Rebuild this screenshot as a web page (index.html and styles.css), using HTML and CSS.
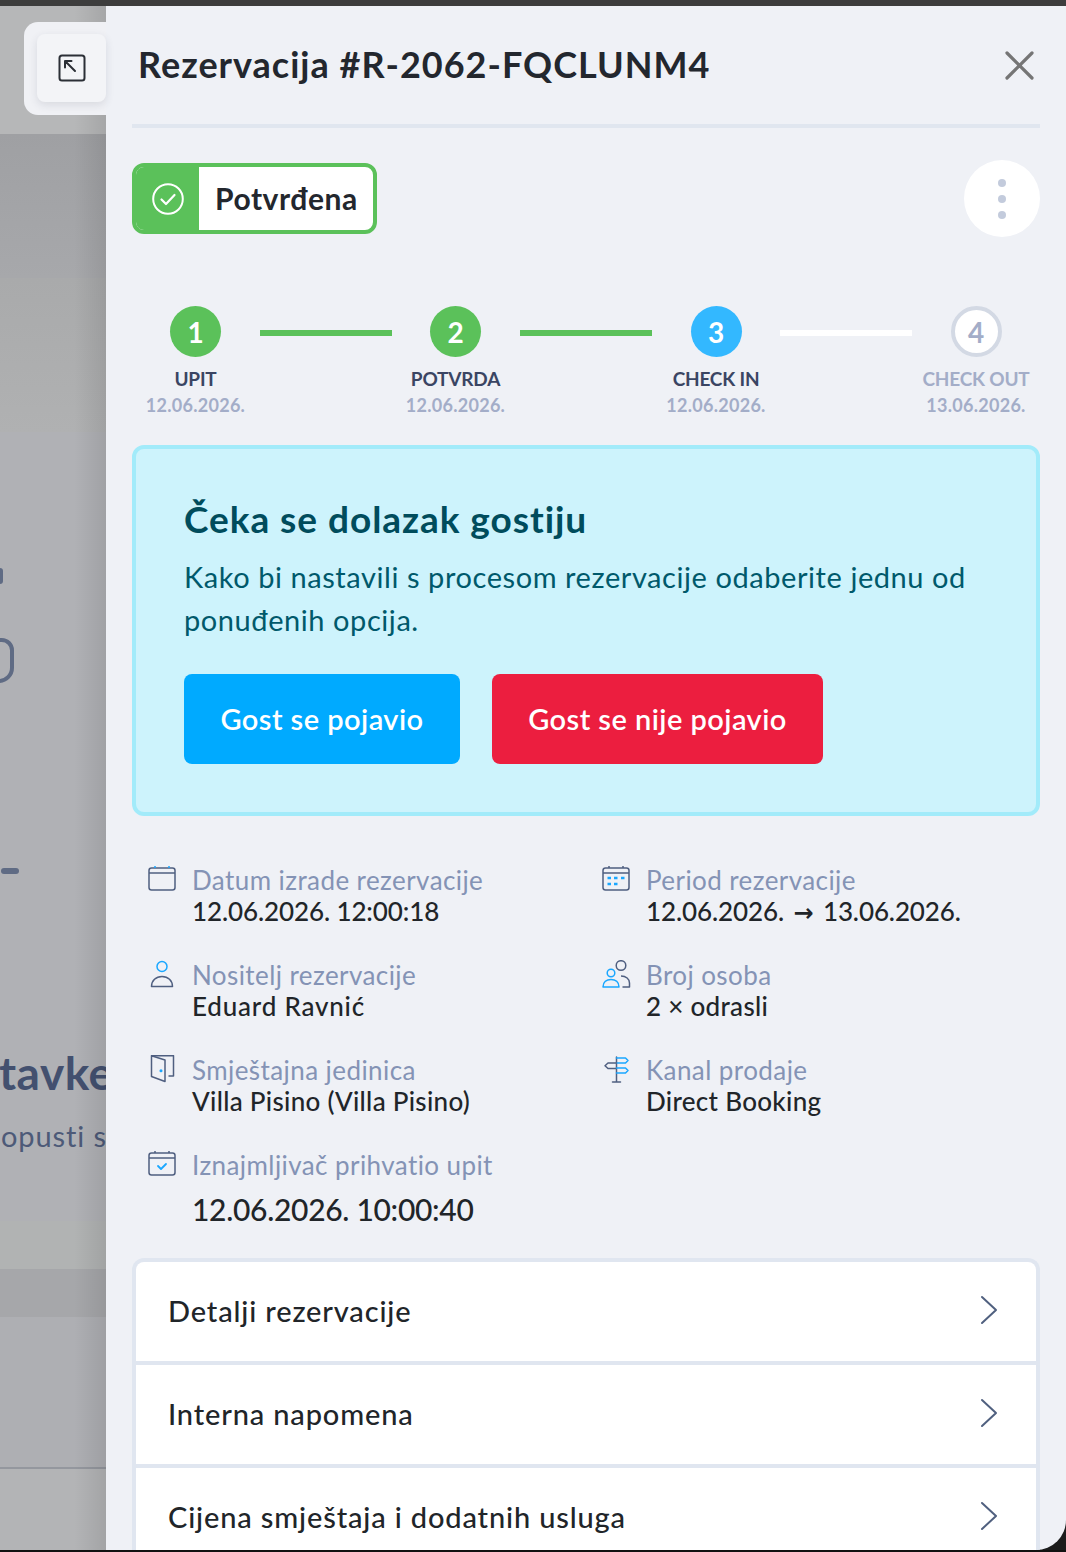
FILE: index.html
```html
<!DOCTYPE html>
<html lang="hr">
<head>
<meta charset="utf-8">
<title>Rezervacija</title>
<link rel="stylesheet" href="styles.css">
</head>
<body>
<div class="screen">
  <div class="topbar"></div>
  <div class="stage">
    <aside class="backdrop">
      <div class="band b1"></div>
      <div class="band b2"></div>
      <div class="band b3"></div>
      <div class="band b4">
        <div class="bg-glyph g1"></div>
        <div class="bg-glyph g2"></div>
        <div class="bg-glyph g3"></div>
        <div class="bg-title">tavke</div>
        <div class="bg-sub">opusti s</div>
      </div>
      <div class="band b5"></div>
      <div class="band b6"></div>
      <div class="band b7"></div>
      <div class="band b8"></div>
      <div class="tab">
        <button class="tab-btn" type="button">
          <svg width="28" height="28" viewBox="0 0 28 28" fill="none" stroke="#2b2f36" stroke-width="2" stroke-linecap="round" stroke-linejoin="round"><rect x="1.5" y="1.5" width="25" height="25" rx="2.5"/><path d="M7 7l10 10M7 7v6.5M7 7h6.5" stroke-width="2"/></svg>
        </button>
      </div>
    </aside>
    <main class="panel">
      <header class="head">
        <h1 class="title">Rezervacija #R-2062-FQCLUNM4</h1>
        <svg class="close" width="29" height="29" viewBox="0 0 29 29" fill="none" stroke="#757575" stroke-width="3.2" stroke-linecap="round"><path d="M2 2l25 25M27 2L2 27"/></svg>
      </header>
      <div class="status-row">
        <div class="badge">
          <span class="badge-icon">
            <svg width="32" height="32" viewBox="0 0 32 32" fill="none" stroke="#fff" stroke-linecap="round" stroke-linejoin="round"><circle cx="16" cy="16" r="14.8" stroke-width="2"/><path d="M9.5 16.5l4.500 4.500 8.500-9" stroke-width="2.200"/></svg>
          </span>
          <span class="badge-text">Potvrđena</span>
        </div>
        <button class="more" type="button"><i></i><i></i><i></i></button>
      </div>
      <ol class="steps">
        <li class="step early">
          <span class="dot done">1</span>
          <span class="s-name">UPIT</span>
          <span class="s-date">12.06.2026.</span>
        </li>
        <li class="line done"></li>
        <li class="step early">
          <span class="dot done">2</span>
          <span class="s-name">POTVRDA</span>
          <span class="s-date">12.06.2026.</span>
        </li>
        <li class="line done"></li>
        <li class="step">
          <span class="dot current">3</span>
          <span class="s-name">CHECK IN</span>
          <span class="s-date">12.06.2026.</span>
        </li>
        <li class="line"></li>
        <li class="step todo">
          <span class="dot">4</span>
          <span class="s-name">CHECK OUT</span>
          <span class="s-date">13.06.2026.</span>
        </li>
      </ol>
      <section class="callout">
        <h2 class="c-title">Čeka se dolazak gostiju</h2>
        <p class="c-text">Kako bi nastavili s procesom rezervacije odaberite jednu od ponuđenih opcija.</p>
        <div class="c-actions">
          <button class="btn blue" type="button">Gost se pojavio</button>
          <button class="btn red" type="button">Gost se nije pojavio</button>
        </div>
      </section>
      <section class="info">
        <div class="item">
          <svg class="ico" width="30" height="28" viewBox="0 0 30 28" fill="none" stroke="#4f5f80" stroke-width="1.5" stroke-linejoin="round"><rect x="2" y="3" width="26" height="22" rx="2.5"/><path d="M2 8h26"/><path d="M8 1v2M22 1v2" stroke="#1aa7ff"/></svg>
          <div><div class="lab">Datum izrade rezervacije</div><div class="val num">12.06.2026. 12:00:18</div></div>
        </div>
        <div class="item">
          <svg class="ico" width="30" height="28" viewBox="0 0 30 28" fill="none" stroke="#4f5f80" stroke-width="1.5" stroke-linejoin="round"><rect x="2" y="3" width="26" height="22" rx="2.5"/><path d="M2 8h26M8 1v2M22 1v2"/><path d="M6.500 13h3.500M13 13h3.500M20 13h3.500M6.500 19h3.500M13 19h3.500" stroke="#1aa7ff" stroke-width="2.500"/></svg>
          <div><div class="lab">Period rezervacije</div><div class="val num">12.06.2026. <span class="arrow">→</span> 13.06.2026.</div></div>
        </div>
        <div class="item">
          <svg class="ico" width="30" height="28" viewBox="0 0 30 28" fill="none" stroke-width="1.500"><circle cx="15" cy="6.500" r="5" stroke="#1aa7ff"/><path d="M4.500 26.500c0-6 4.500-10 10.500-10s10.500 4 10.500 10z" stroke="#4f5f80" stroke-linejoin="round"/></svg>
          <div><div class="lab">Nositelj rezervacije</div><div class="val name">Eduard Ravnić</div></div>
        </div>
        <div class="item">
          <svg class="ico" width="30" height="28" viewBox="0 0 30 28" fill="none" stroke-width="1.500" stroke-linejoin="round"><circle cx="20" cy="5.500" r="4.800" stroke="#4f5f80"/><circle cx="10" cy="13" r="3.800" stroke="#1aa7ff"/><path d="M2 27c0-5 3.500-7.500 8-7.500s8 2.500 8 7.500z" stroke="#1aa7ff"/><path d="M20 16c5 0 8.500 3 8.500 7v4h-7" stroke="#4f5f80"/></svg>
          <div><div class="lab">Broj osoba</div><div class="val">2 × odrasli</div></div>
        </div>
        <div class="item">
          <svg class="ico" width="30" height="28" viewBox="0 0 30 28" fill="none" stroke="#4f5f80" stroke-width="1.500" stroke-linejoin="round"><path d="M4.500 .7H26.500V21H21.500"/><path d="M4.500 .7L18 5V26.500L4.500 21.500z"/><circle cx="14" cy="15.700" r=".8" fill="#1aa7ff" stroke="#1aa7ff"/></svg>
          <div><div class="lab">Smještajna jedinica</div><div class="val">Villa Pisino (Villa Pisino)</div></div>
        </div>
        <div class="item">
          <svg class="ico" width="30" height="28" viewBox="0 0 30 28" fill="none" stroke-width="1.500" stroke-linejoin="round" stroke-linecap="round"><path d="M15.500 2v25M11.500 27h8" stroke="#4f5f80"/><path d="M15.500 3h9l2.500 2.500-2.500 2.500h-9" stroke="#1aa7ff"/><path d="M15.500 8H7l-3 2.750 3 2.750h8.500" stroke="#4f5f80"/><path d="M15.500 13h9l2.500 2.500-2.500 2.500h-9" stroke="#1aa7ff"/></svg>
          <div><div class="lab">Kanal prodaje</div><div class="val">Direct Booking</div></div>
        </div>
        <div class="item wide">
          <svg class="ico" width="30" height="28" viewBox="0 0 30 28" fill="none" stroke="#4f5f80" stroke-width="1.500" stroke-linejoin="round"><rect x="2" y="3" width="26" height="22" rx="2.500"/><path d="M2 8h26M8 1v2M22 1v2"/><path d="M11 16l3 3 5-5" stroke="#1aa7ff" stroke-width="1.800" stroke-linecap="round"/></svg>
          <div><div class="lab">Iznajmljivač prihvatio upit</div><div class="val big">12.06.2026. 10:00:40</div></div>
        </div>
      </section>
      <section class="accordion">
        <div class="row"><span>Detalji rezervacije</span><svg width="18" height="30" viewBox="0 0 18 30" fill="none" stroke="#50607f" stroke-width="2" stroke-linecap="round" stroke-linejoin="round"><path d="M2 2l14 13L2 28"/></svg></div>
        <div class="row"><span>Interna napomena</span><svg width="18" height="30" viewBox="0 0 18 30" fill="none" stroke="#50607f" stroke-width="2" stroke-linecap="round" stroke-linejoin="round"><path d="M2 2l14 13L2 28"/></svg></div>
        <div class="row"><span>Cijena smještaja i dodatnih usluga</span><svg width="18" height="30" viewBox="0 0 18 30" fill="none" stroke="#50607f" stroke-width="2" stroke-linecap="round" stroke-linejoin="round"><path d="M2 2l14 13L2 28"/></svg></div>
      </section>
    </main>
  </div>
  <div class="bottombar"></div>
</div>
</body>
</html>
```
FILE: styles.css
```css
* { box-sizing: border-box; }
html, body { margin: 0; padding: 0; height: 100%; overflow: hidden; }
body { background: #222; font-family: "Lato", "Noto Sans", sans-serif; color: #212529; }
.screen { width: 1066px; height: 1552px; display: flex; flex-direction: column; background: #1c1c1c; }
.topbar { height: 6px; background: #3d3d3d; flex: none; }
.bottombar { height: 2px; background: #111; flex: none; }
.stage { flex: 1; display: flex; min-height: 0; }

.backdrop { position: relative; width: 106px; flex: none; display: flex; flex-direction: column; overflow: visible; background: #aeafb2; }
.backdrop::after { content: ""; position: absolute; inset: 0; background: linear-gradient(90deg, rgba(0,0,0,0) 70%, rgba(0,0,0,.09) 100%); pointer-events: none; }
.band { flex: none; position: relative; overflow: hidden; }
.b1 { height: 128px; background: #b6b7b8; }
.b2 { height: 144px; background: linear-gradient(#9fa0a3, #a7a8ab); }
.b3 { height: 154px; background: linear-gradient(#a9aaab, #b0b1b2); }
.b4 { height: 789px; background: #b0b1b5; }
.b5 { height: 48px; background: #b1b3b3; }
.b6 { height: 48px; background: #a6a7aa; }
.b7 { height: 152px; background: #aeafb3; border-bottom: 2px solid #94979e; }
.b8 { flex: 1; background: #b3b4b6; }
.bg-glyph { position: absolute; background: #5f6b84; }
.g1 { left: -3px; top: 136px; width: 6px; height: 16px; border-radius: 3px; }
.g2 { left: -12px; top: 206px; width: 26px; height: 45px; background: transparent; border: 4px solid #5f6b84; border-radius: 14px 16px 20px 14px; }
.g3 { left: 1px; top: 436px; width: 18px; height: 6px; border-radius: 3px; }
.bg-title { position: absolute; left: -1px; top: 616px; font-size: 46px; font-weight: 700; letter-spacing: .5px; color: #43506f; line-height: 50px; white-space: nowrap; }
.bg-sub { position: absolute; left: 1px; top: 687px; font-size: 29px; letter-spacing: .9px; color: #4d5a78; line-height: 34px; white-space: nowrap; }

.tab { position: absolute; z-index: 2; left: 24px; top: 16px; width: 82px; height: 93px; background: #f0f1f5; border-radius: 14px 0 0 14px; padding: 12px 0 0 13px; }
.tab-btn { width: 69px; height: 68px; padding: 0; border: 0; background: #f3f4f7; border-radius: 8px; box-shadow: 0 3px 8px rgba(40,50,70,.12); display: flex; align-items: center; justify-content: center; }

.panel { flex: 1; min-width: 0; background: #eff1f6; padding: 0 26px 0 26px; overflow: hidden; border-bottom-right-radius: 30px; }
.head { height: 122px; border-bottom: 4px solid #e0e6ef; display: flex; align-items: flex-start; justify-content: space-between; padding: 34px 6px 0 6px; }
.title { margin: 0; font-size: 36px; line-height: 48px; font-weight: 700; letter-spacing: 1px; color: #23272e; }
.close { margin-top: 11px; }
.status-row { display: flex; justify-content: space-between; align-items: flex-start; margin-top: 32px; }
.badge { margin-top: 3px; height: 71px; width: 245px; display: flex; border: 4px solid #5bc15a; border-radius: 12px; overflow: hidden; background: #fff; }
.badge-icon { width: 63px; background: #5bc15a; display: flex; align-items: center; justify-content: center; }
.badge-text { padding-left: 16px; font-size: 30px; font-weight: 700; letter-spacing: .55px; line-height: 63px; color: #23272e; }
.more { width: 76px; height: 77px; border-radius: 50%; background: #fff; border: 0; padding: 0; display: flex; flex-direction: column; align-items: center; justify-content: center; gap: 8px; }
.more i { width: 8px; height: 8px; border-radius: 50%; background: #c3cbdc; }

.steps { list-style: none; margin: 69px 0 0; padding: 0; display: flex; align-items: flex-start; }
.step { width: 128px; display: flex; flex-direction: column; align-items: center; }
.step.early { padding-right: 1px; }
.line { width: 132px; height: 6px; margin-top: 24px; background: #fff; }
.line.done { background: #5bc15a; }
.dot { width: 51px; height: 51px; border-radius: 50%; display: flex; align-items: center; justify-content: center; font-size: 28px; font-weight: 700; color: #fff; background: #fff; }
.dot.done { background: #5bc15a; }
.dot.current { background: #33b8ff; }
.todo .dot { color: #a3adc8; border: 4px solid #d3d9e4; }
.s-name { margin-top: 9px; font-size: 19px; line-height: 26px; font-weight: 700; letter-spacing: -.2px; color: #3a4563; white-space: nowrap; }
.s-date { font-size: 18px; line-height: 26px; font-weight: 700; letter-spacing: .27px; color: #a3adc8; white-space: nowrap; }
.todo .s-name { color: #a3adc8; }

.callout { margin-top: 27px; height: 371px; border: 4px solid #a2ebfa; border-radius: 12px; background: #cdf3fc; padding: 46px 48px 0; }
.c-title { margin: 0; font-size: 37px; line-height: 48px; font-weight: 700; letter-spacing: .95px; color: #004c5c; }
.c-text { margin: 12px 0 0; font-size: 29px; line-height: 43px; letter-spacing: .57px; color: #00596b; }
.c-actions { display: flex; gap: 32px; margin-top: 33px; }
.btn { height: 90px; border: 0; border-radius: 8px; padding: 0 0 2px; font: 600 29px "Lato", sans-serif; letter-spacing: .45px; color: #fff; }
.blue { background: #00aaff; width: 276px; }
.red { background: #ec1e3f; width: 331px; }

.info { margin-top: 49px; display: grid; grid-template-columns: 454px 1fr; grid-auto-rows: 95px; padding-left: 15px; }
.item { display: flex; gap: 15px; align-items: flex-start; }
.ico { flex: none; }
.lab { font-size: 26px; line-height: 31px; letter-spacing: .42px; color: #8493b5; white-space: nowrap; }
.val { font-size: 26px; line-height: 31px; font-weight: 500; letter-spacing: .3px; color: #212529; white-space: nowrap; }
.val.num { letter-spacing: -.1px; }
.val.name { letter-spacing: .8px; }
.val.big { font-size: 30px; line-height: 40px; margin-top: 8px; letter-spacing: -.3px; }
.arrow { font-family: "DejaVu Sans", sans-serif; font-weight: 700; font-size: 24px; line-height: 20px; margin: 0 3px; }
.wide { grid-column: 1 / span 2; }

.accordion { margin-top: 13px; border: 4px solid #e0e6f0; border-bottom: 0; border-radius: 12px 12px 0 0; background: #e0e6f0; display: flex; flex-direction: column; gap: 4px; overflow: hidden; }
.row { height: 99px; background: #fff; display: flex; align-items: center; justify-content: space-between; padding: 0 38px 0 32px; font-size: 29px; font-weight: 500; letter-spacing: .85px; color: #212529; }
.row span { margin-bottom: 2px; }
.row svg { margin-bottom: 3px; }
```
